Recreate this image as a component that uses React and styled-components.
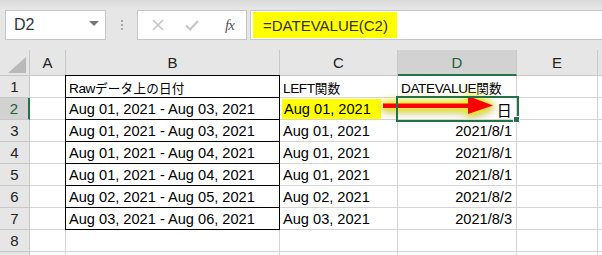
import React from "react"
import styled, { createGlobalStyle, css } from "styled-components"

const GlobalStyle = createGlobalStyle`
  html, body { margin: 0; padding: 0; background: #fff; overflow: hidden; }
`

const CELL_FONT = `"Liberation Sans", "Noto Sans CJK JP", sans-serif`
const UI_FONT = `"Liberation Sans", "Noto Sans CJK JP", sans-serif`

const Page = styled.div`
  width: 602px;
  height: 255px;
  overflow: hidden;
  position: relative;
  font-family: ${CELL_FONT};
`

const FormulaBar = styled.div`
  height: 50px;
  box-sizing: border-box;
  padding: 10px 0 0 5px;
  display: flex;
  align-items: flex-start;
  background: linear-gradient(#dadada 0px, #e6e6e6 9px, #e6e6e6 100%);
`

const NameBox = styled.div`
  width: 101px;
  height: 30px;
  box-sizing: border-box;
  border: 1px solid #c6c6c6;
  background: #fff;
  display: flex;
  align-items: center;
  justify-content: space-between;
  padding: 0 6px 0 8px;
  font-family: ${UI_FONT};
  font-size: 16px;
  color: #333;
`

const Caret = styled.span`
  width: 0;
  height: 0;
  border-left: 5px solid transparent;
  border-right: 5px solid transparent;
  border-top: 5px solid #777;
  margin-bottom: 4px;
`

const Grip = styled.div`
  width: 31px;
  height: 30px;
  display: flex;
  flex-direction: column;
  align-items: center;
  justify-content: center;
  gap: 2px;
  span {
    width: 2px;
    height: 2px;
    background: #a8a8a8;
  }
`

const FuncButtons = styled.div`
  width: 110px;
  height: 30px;
  box-sizing: border-box;
  border: 1px solid #c6c6c6;
  background: #fff;
  display: flex;
  align-items: center;
  padding: 0 0 0 14px;
  gap: 21px;
`

const FxLabel = styled.span`
  font-family: "Liberation Serif", serif;
  font-style: italic;
  font-size: 15px;
  color: #555;
  margin-left: 5px;
  letter-spacing: -1px;
`

const FormulaInput = styled.div`
  flex: 1;
  height: 30px;
  margin: 0 -4px 0 3px;
  box-sizing: border-box;
  border: 1px solid #c6c6c6;
  background: #fff;
  padding: 1px 2px;
  display: flex;
  align-items: stretch;
`

const FormulaText = styled.span`
  background: #ffff00;
  padding: 0 9px 0 10px;
  display: flex;
  align-items: center;
  font-family: ${UI_FONT};
  font-size: 15px;
  color: #333;
`

const Sheet = styled.div`
  display: grid;
  grid-template-columns: 30px 36px 214px 118px 119px 81px 1fr;
  grid-template-rows: 26px;
  grid-auto-rows: 22px;
`

const headerBase = css`
  background: #e6e6e6;
  border-right: 1px solid #c8c8c8;
  border-bottom: 1px solid #c8c8c8;
  box-sizing: border-box;
  display: flex;
  align-items: center;
  justify-content: center;
  font-family: ${UI_FONT};
  font-size: 15px;
  color: #222;
`

const Corner = styled.div`
  ${headerBase};
  align-items: flex-end;
  justify-content: flex-end;
  padding: 0 3px 2px 0;
`

const CornerMark = styled.span`
  width: 0;
  height: 0;
  border-left: 18px solid transparent;
  border-bottom: 16px solid #b9b9b9;
`

const ColHead = styled.div`
  ${headerBase};
  ${(p) =>
    p.$active &&
    css`
      background: #d2d2d2;
      border-bottom: 2px solid #217346;
      color: #1d5f3b;
      padding-top: 1px;
    `}
`

const RowHead = styled.div`
  ${headerBase};
  ${(p) =>
    p.$active &&
    css`
      background: #d2d2d2;
      border-right: 2px solid #217346;
      color: #1d5f3b;
    `}
`

const Cell = styled.div`
  position: relative;
  box-sizing: border-box;
  border-right: 1px solid #d4d4d4;
  border-bottom: 1px solid #d4d4d4;
  display: flex;
  align-items: center;
  justify-content: ${(p) => (p.$right ? "flex-end" : "flex-start")};
  padding: 1px 4px 0 3px;
  font-size: 14.6px;
  color: #000;
  white-space: nowrap;
  overflow: visible;
  ${(p) =>
    p.$boxed &&
    css`
      border-right-color: #000;
      border-bottom-color: #000;
      box-shadow: -1px 0 0 #000 ${p.$first ? ", 0 -1px 0 #000, -1px -1px 0 #000" : ""};
    `}
  ${(p) =>
    p.$selected &&
    css`
      z-index: 2;
      outline: 2px solid #217346;
      outline-offset: 0px;
    `}
`

const Label = styled.span`
  font-size: 13.6px;
  letter-spacing: -0.4px;
`

const Jp = styled.span`
  font-family: "Noto Sans CJK JP", sans-serif;
  font-size: ${(p) => p.$size || 12.6}px;
  letter-spacing: 0.2px;
`

const Marker = styled.span`
  background: #ffff00;
  padding: 0 10px 0 2px;
  line-height: 20px;
  margin-left: -1px;
`

const FillHandle = styled.span`
  position: absolute;
  right: -3px;
  bottom: -3px;
  width: 5px;
  height: 5px;
  background: #217346;
  border: 1px solid #fff;
  box-sizing: content-box;
  margin: -1px;
`

const ArrowLayer = styled.svg`
  position: absolute;
  left: 376px;
  top: 91px;
  overflow: visible;
  filter: drop-shadow(0 0 3px rgba(255, 255, 0, 1)) drop-shadow(0 0 5px rgba(245, 245, 0, 0.9))
    drop-shadow(1px 2px 2px rgba(90, 70, 0, 0.4));
  pointer-events: none;
`

const rows = [
  {
    b: (
      <Label>
        Raw<Jp>データ上の日付</Jp>
      </Label>
    ),
    c: (
      <Label>
        LEFT<Jp>関数</Jp>
      </Label>
    ),
    d: (
      <Label>
        DATEVALUE<Jp>関数</Jp>
      </Label>
    ),
  },
  { b: "Aug 01, 2021 - Aug 03, 2021", c: "Aug 01, 2021", d: <Jp $size={15}>日</Jp>, active: true },
  { b: "Aug 01, 2021 - Aug 03, 2021", c: "Aug 01, 2021", d: "2021/8/1" },
  { b: "Aug 01, 2021 - Aug 04, 2021", c: "Aug 01, 2021", d: "2021/8/1" },
  { b: "Aug 01, 2021 - Aug 04, 2021", c: "Aug 01, 2021", d: "2021/8/1" },
  { b: "Aug 02, 2021 - Aug 05, 2021", c: "Aug 02, 2021", d: "2021/8/2" },
  { b: "Aug 03, 2021 - Aug 06, 2021", c: "Aug 03, 2021", d: "2021/8/3" },
  { n: 8 },
  { n: "" },
]

const CrossIcon = () => (
  <svg width="12" height="12" viewBox="0 0 12 12">
    <path d="M1 1 L11 11 M11 1 L1 11" stroke="#c4c4c4" strokeWidth="1.6" fill="none" />
  </svg>
)

const CheckIcon = () => (
  <svg width="14" height="11" viewBox="0 0 14 11">
    <path d="M1 5.5 L5 9.5 L13 1" stroke="#c4c4c4" strokeWidth="2" fill="none" />
  </svg>
)

export default function App() {
  return (
    <Page>
      <GlobalStyle />
      <FormulaBar>
        <NameBox>
          D2
          <Caret />
        </NameBox>
        <Grip>
          <span />
          <span />
          <span />
        </Grip>
        <FuncButtons>
          <CrossIcon />
          <CheckIcon />
          <FxLabel>fx</FxLabel>
        </FuncButtons>
        <FormulaInput>
          <FormulaText>=DATEVALUE(C2)</FormulaText>
        </FormulaInput>
      </FormulaBar>

      <Sheet>
        <Corner>
          <CornerMark />
        </Corner>
        {["A", "B", "C", "D", "E", ""].map((l) => (
          <ColHead key={l || "F"} $active={l === "D"}>
            {l}
          </ColHead>
        ))}
        {rows.map((r, i) => {
          const boxed = i < 7
          return (
            <React.Fragment key={i}>
              <RowHead $active={r.active}>{r.n !== undefined ? r.n : i + 1}</RowHead>
              <Cell />
              <Cell $boxed={boxed} $first={i === 0}>
                {r.b}
              </Cell>
              <Cell>{r.active ? <Marker>{r.c}</Marker> : r.c}</Cell>
              <Cell $right={i > 0} $selected={r.active}>
                {r.d}
                {r.active && <FillHandle />}
              </Cell>
              <Cell />
              <Cell />
            </React.Fragment>
          )
        })}
      </Sheet>

      <ArrowLayer width="120" height="24" viewBox="0 0 120 24">
        <rect x="7" y="12.5" width="88" height="4.5" fill="#ff0000" />
        <polygon points="92,5 117,14.5 92,23" fill="#ff0000" />
      </ArrowLayer>
    </Page>
  )
}
